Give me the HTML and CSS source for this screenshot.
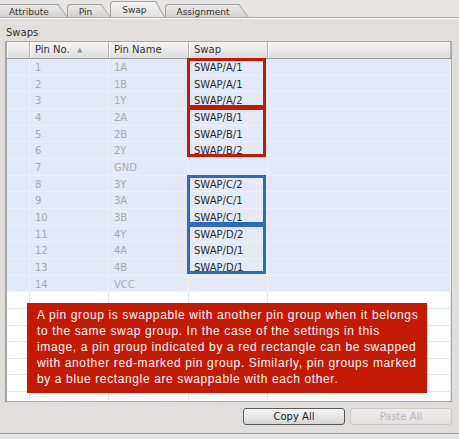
FILE: index.html
```html
<!DOCTYPE html>
<html lang="en">
<head>
    <meta charset="UTF-8">
    <title>Swap</title>
    <link rel="stylesheet" href="styles.css">
</head>
<body>
    <div class="tabs">
        <div class="tab first">Attribute</div>
        <div class="tab">Pin</div>
        <div class="tab active">Swap</div>
        <div class="tab">Assignment</div>
    </div>
    <div class="panel">
        <div class="label">Swaps</div>
        <div class="grid">
            <div class="row head">
                <div class="cell"></div>
                <div class="cell">Pin No. <span class="sort">&#9650;</span></div>
                <div class="cell">Pin Name</div>
                <div class="cell">Swap</div>
                <div class="cell"></div>
            </div>
            <div class="row"><div class="cell"></div><div class="cell dim">1</div><div class="cell dim">1A</div><div class="cell">SWAP/A/1</div><div class="cell"></div></div>
            <div class="row"><div class="cell"></div><div class="cell dim">2</div><div class="cell dim">1B</div><div class="cell">SWAP/A/1</div><div class="cell"></div></div>
            <div class="row"><div class="cell"></div><div class="cell dim">3</div><div class="cell dim">1Y</div><div class="cell">SWAP/A/2</div><div class="cell"></div></div>
            <div class="row"><div class="cell"></div><div class="cell dim">4</div><div class="cell dim">2A</div><div class="cell">SWAP/B/1</div><div class="cell"></div></div>
            <div class="row"><div class="cell"></div><div class="cell dim">5</div><div class="cell dim">2B</div><div class="cell">SWAP/B/1</div><div class="cell"></div></div>
            <div class="row"><div class="cell"></div><div class="cell dim">6</div><div class="cell dim">2Y</div><div class="cell">SWAP/B/2</div><div class="cell"></div></div>
            <div class="row"><div class="cell"></div><div class="cell dim">7</div><div class="cell dim">GND</div><div class="cell"></div><div class="cell"></div></div>
            <div class="row"><div class="cell"></div><div class="cell dim">8</div><div class="cell dim">3Y</div><div class="cell">SWAP/C/2</div><div class="cell"></div></div>
            <div class="row"><div class="cell"></div><div class="cell dim">9</div><div class="cell dim">3A</div><div class="cell">SWAP/C/1</div><div class="cell"></div></div>
            <div class="row"><div class="cell"></div><div class="cell dim">10</div><div class="cell dim">3B</div><div class="cell">SWAP/C/1</div><div class="cell"></div></div>
            <div class="row"><div class="cell"></div><div class="cell dim">11</div><div class="cell dim">4Y</div><div class="cell">SWAP/D/2</div><div class="cell"></div></div>
            <div class="row"><div class="cell"></div><div class="cell dim">12</div><div class="cell dim">4A</div><div class="cell">SWAP/D/1</div><div class="cell"></div></div>
            <div class="row"><div class="cell"></div><div class="cell dim">13</div><div class="cell dim">4B</div><div class="cell">SWAP/D/1</div><div class="cell"></div></div>
            <div class="row"><div class="cell"></div><div class="cell dim">14</div><div class="cell dim">VCC</div><div class="cell"></div><div class="cell"></div></div>
            <div class="row empty"><div class="cell"></div><div class="cell"></div><div class="cell"></div><div class="cell"></div><div class="cell"></div></div>
            <div class="row empty"><div class="cell"></div><div class="cell"></div><div class="cell"></div><div class="cell"></div><div class="cell"></div></div>
            <div class="row empty"><div class="cell"></div><div class="cell"></div><div class="cell"></div><div class="cell"></div><div class="cell"></div></div>
            <div class="row empty"><div class="cell"></div><div class="cell"></div><div class="cell"></div><div class="cell"></div><div class="cell"></div></div>
            <div class="row empty"><div class="cell"></div><div class="cell"></div><div class="cell"></div><div class="cell"></div><div class="cell"></div></div>
            <div class="row empty"><div class="cell"></div><div class="cell"></div><div class="cell"></div><div class="cell"></div><div class="cell"></div></div>
            <div class="row empty"><div class="cell"></div><div class="cell"></div><div class="cell"></div><div class="cell"></div><div class="cell"></div></div>

            <div class="mark red groupA"></div>
            <div class="mark red groupB"></div>
            <div class="mark blue groupC"></div>
            <div class="mark blue groupD"></div>

            <div class="note">
                A pin group is swappable with another pin group when it belongs<br>
                to the same swap group. In the case of the settings in this<br>
                image, a pin group indicated by a red rectangle can be swapped<br>
                with another red-marked pin group. Similarly, pin groups marked<br>
                by a blue rectangle are swappable with each other.
            </div>
        </div>
        <div class="buttons">
            <div class="button">Copy All</div>
            <div class="button disabled">Paste All</div>
        </div>
    </div>
    <div class="footer"></div>
</body>
</html>
```

FILE: styles.css
```css
* {
    margin: 0;
    padding: 0;
    box-sizing: border-box;
}
body {
    width: 459px;
    height: 439px;
    overflow: hidden;
    background-color: #e0dddb;
    color: #333;
    font-family: 'DejaVu Sans', sans-serif;
    font-size: 10px;
}
.tabs {
    display: flex;
    align-items: flex-end;
    height: 18px;
    background-color: #e7e5e3;
    border-bottom: 1px solid #b2b0ae;
    box-shadow: 0 1px 0 #f8f8f8;
    overflow: hidden;
}
.tab {
    position: relative;
    z-index: 1;
    height: 13px;
    padding: 1px 8px 0 11px;
    margin-right: 10px;
    border: 1px solid #a2a2a2;
    border-right: none;
    border-bottom: none;
    border-radius: 4px 0 0 0;
    background: linear-gradient(#eceae8, #d3d1cf);
    font-size: 9px;
    line-height: 12px;
    color: #333;
}
.tab::after {
    content: '';
    position: absolute;
    z-index: -1;
    top: -1px;
    right: -1px;
    width: 12px;
    height: 13px;
    border-top: 1px solid #a2a2a2;
    border-right: 1px solid #a2a2a2;
    background: linear-gradient(#eceae8, #d3d1cf);
    transform: skewX(37deg);
    transform-origin: top left;
}
.tab.first {
    margin-left: -3px;
}
.tab.active {
    z-index: 2;
    height: 18px;
    margin-bottom: -2px;
    padding-top: 1px;
    padding-bottom: 2px;
    line-height: 15px;
    background: linear-gradient(#f3f2f1, #e0dddb);
}
.tab.active::after {
    height: 18px;
    transform: skewX(29deg);
    background: linear-gradient(#f3f2f1, #e0dddb);
}
.panel {
    padding: 0 7px 0 5px;
}
.label {
    margin: 9px 0 2px 1px;
    line-height: 12px;
}
.grid {
    position: relative;
    height: 361px;
    overflow: hidden;
    background-color: #fff;
    border: 1px solid #a8a8a8;
    border-left: 2px solid #a4a4a4;
}
.row {
    display: grid;
    grid-template-columns: 23px 79px 80px 79px 1fr;
    height: 16.67px;
    background-color: #e3e9f5;
}
.cell {
    padding: 2px 0 0 5px;
    border-right: 1px solid #edf0f7;
    border-bottom: 1px solid #edf0f7;
    line-height: 14px;
    white-space: nowrap;
    overflow: hidden;
    color: #2b2b2b;
}
.cell.dim {
    color: #aaaaaa;
}
.row.head {
    height: 17px;
    background: linear-gradient(#f4f4f4, #dcdcdc);
    border-bottom: 1px solid #9c9c9c;
}
.row.head .cell {
    padding-top: 0;
    border-right: 1px solid #b4b4b4;
    border-bottom: none;
    box-shadow: inset 1px 0 0 #fafafa;
    line-height: 16px;
    color: #333;
}
.sort {
    margin-left: 4px;
    font-size: 7px;
    color: #9a9a9a;
    vertical-align: 1px;
}
.row.empty {
    background-color: #fff;
}
.row.empty .cell {
    border-color: #e2e6ee;
}
.mark {
    position: absolute;
    left: 180px;
    width: 79px;
    height: 50px;
    border: 3px solid;
}
.mark.red {
    border-color: #c21a06;
}
.mark.blue {
    border-color: #2e6bbf;
}
.groupA {
    top: 16px;
}
.groupB {
    top: 65px;
}
.groupC {
    top: 133px;
}
.groupD {
    top: 182px;
}
.note {
    position: absolute;
    left: 20px;
    top: 261px;
    width: 400px;
    height: 90px;
    padding: 4px 0 0 10px;
    background-color: #c41a03;
    color: #fff;
    font-family: 'Liberation Sans', Arial, sans-serif;
    font-size: 12px;
    line-height: 16px;
    letter-spacing: 0.62px;
    white-space: nowrap;
}
.buttons {
    display: flex;
    justify-content: flex-end;
    gap: 5px;
    margin-top: 6px;
}
.button {
    width: 102px;
    height: 17px;
    border: 1px solid #5a5a5a;
    border-radius: 3px;
    background: linear-gradient(#f6f6f6, #d6d6d6);
    text-align: center;
    line-height: 15px;
    color: #222;
}
.button.disabled {
    border-color: #c9c9c9;
    background: linear-gradient(#eeeceb, #e2e0de);
    color: #b9b9b9;
}
.footer {
    margin-top: 8px;
    height: 10px;
    border-top: 1px solid #9e9e9e;
    background-color: #e6e4e2;
}
```
